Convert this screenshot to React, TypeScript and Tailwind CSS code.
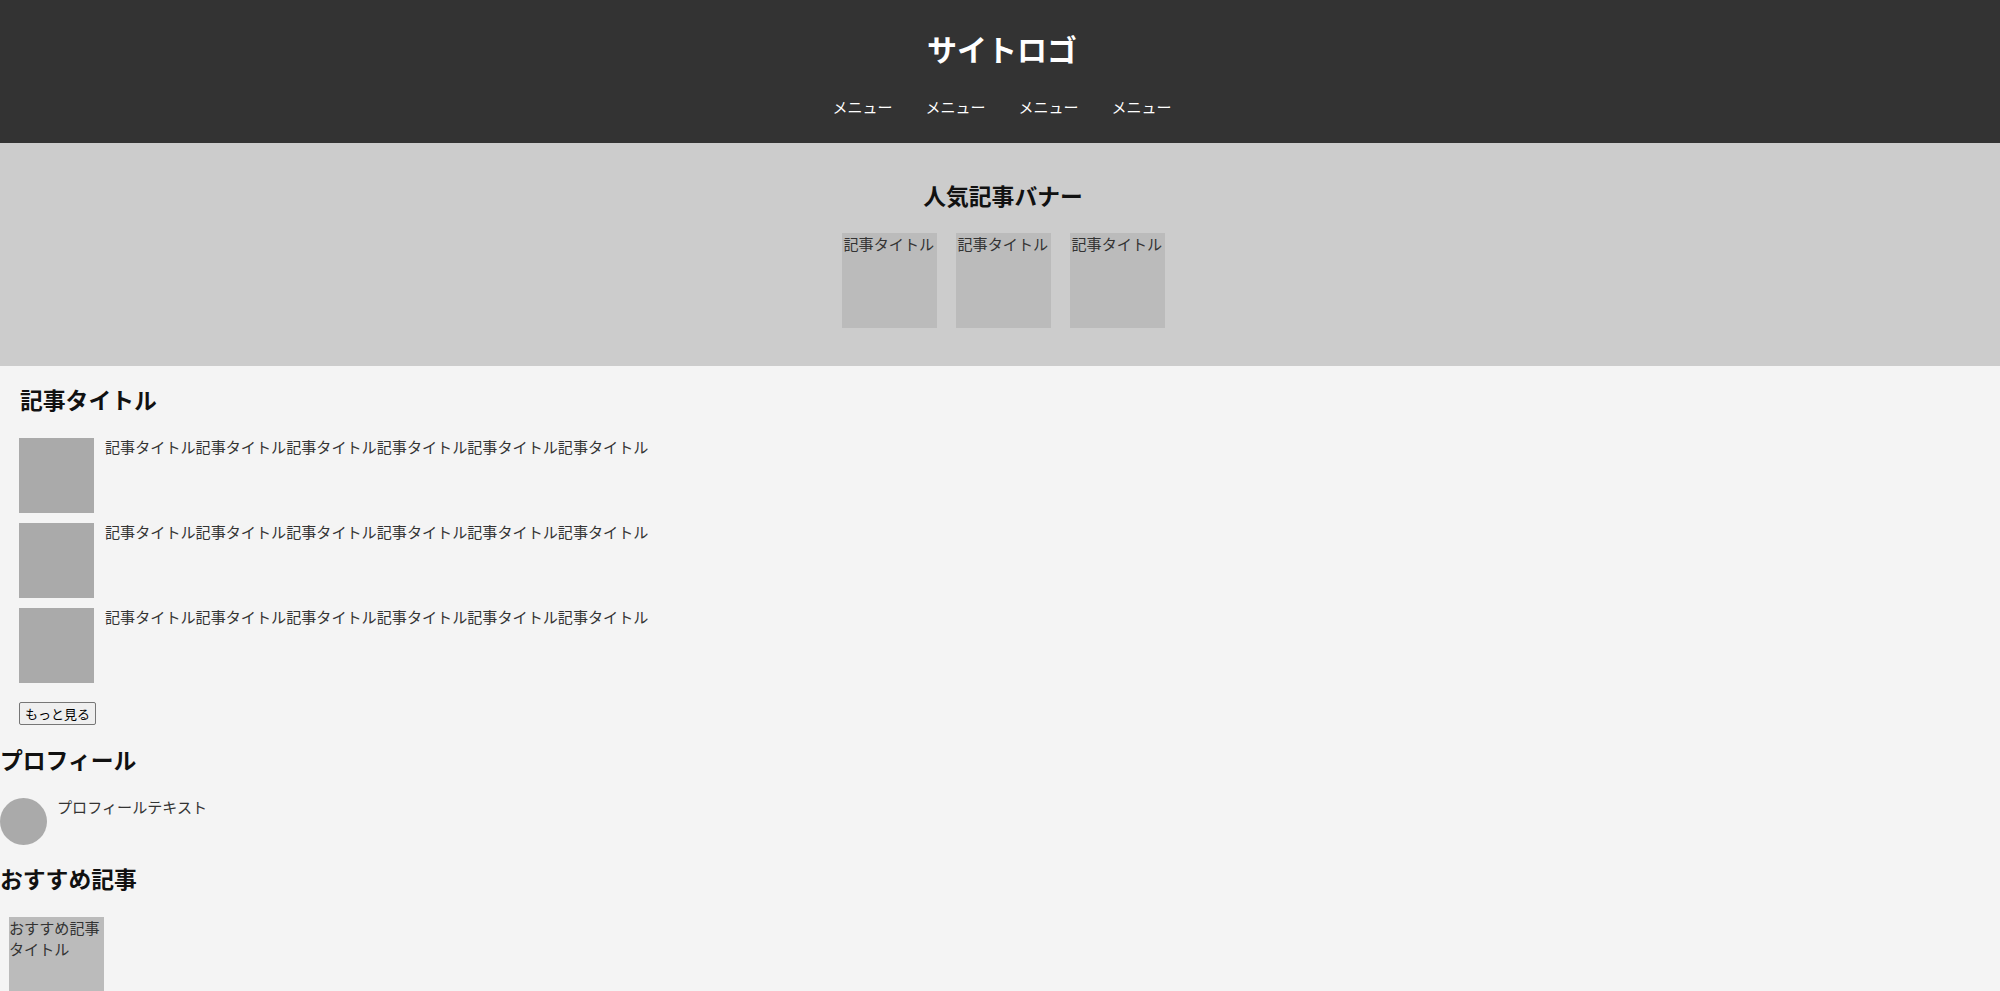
import React from 'react';

const menus = ['メニュー', 'メニュー', 'メニュー', 'メニュー'];
const banners = ['記事タイトル', '記事タイトル', '記事タイトル'];
const posts = [1, 2, 3];
const longTitle = '記事タイトル記事タイトル記事タイトル記事タイトル記事タイトル記事タイトル';

export default function App() {
  return (
    <div className="min-h-screen bg-[#f4f4f4] text-[#333] font-['Noto_Sans_CJK_JP','Noto_Sans',sans-serif]">
      {/* header */}
      <header className="h-[143px] bg-[#333] pl-1 pt-[30px] flex flex-col items-center">
        <h1 className="text-[30px] leading-[36px] font-bold text-white">サイトロゴ</h1>
        <nav className="mt-[30px] flex gap-[33px]">
          {menus.map((m, i) => (
            <a key={i} className="w-[60px] text-[15px] leading-[22px] text-white">
              {m}
            </a>
          ))}
        </nav>
      </header>

      {/* popular banner */}
      <section className="h-[223px] bg-[#ccc] pl-[6px] pt-[39px] flex flex-col items-center">
        <h2 className="text-[22.8px] leading-[28px] font-bold text-[#111]">人気記事バナー</h2>
        <div className="mt-[23px] flex gap-[19px]">
          {banners.map((b, i) => (
            <div key={i} className="w-[95px] h-[95px] bg-[#bbb] pl-[2px] text-[15.1px] leading-[20px]">
              {b}
            </div>
          ))}
        </div>
      </section>

      {/* article list */}
      <section className="pl-[20px] pt-[20px]">
        <h2 className="text-[22.8px] leading-[28px] font-bold text-[#111]">記事タイトル</h2>
        <ul className="mt-[24px] ml-[-1px] flex flex-col gap-[10px]">
          {posts.map((p) => (
            <li key={p} className="flex gap-[11px]">
              <div className="w-[75px] h-[75px] bg-[#aaa] shrink-0"></div>
              <p className="text-[15.1px] leading-[17px]">{longTitle}</p>
            </li>
          ))}
        </ul>
        <button className="mt-[19px] ml-[-1px] w-[77px] h-[23px] border border-[#767676] rounded-[2px] bg-[#efefef] text-[13px] leading-[19px] text-black">
          もっと見る
        </button>
      </section>

      {/* profile */}
      <section className="pt-[21px]">
        <h2 className="text-[22.8px] leading-[28px] font-bold text-[#111]">プロフィール</h2>
        <div className="mt-[24px] flex gap-[10px]">
          <div className="w-[47px] h-[47px] rounded-full bg-[#aaa] shrink-0"></div>
          <p className="text-[15.1px] leading-[17px]">プロフィールテキスト</p>
        </div>
      </section>

      {/* recommended */}
      <section className="pt-[20px]">
        <h2 className="text-[22.8px] leading-[28px] font-bold text-[#111]">おすすめ記事</h2>
        <div className="mt-[24px] flex">
          <div className="ml-[9px] w-[95px] h-[95px] bg-[#bbb] text-[15.1px] leading-[21px]">
            おすすめ記事タイトル
          </div>
        </div>
      </section>
    </div>
  );
}
